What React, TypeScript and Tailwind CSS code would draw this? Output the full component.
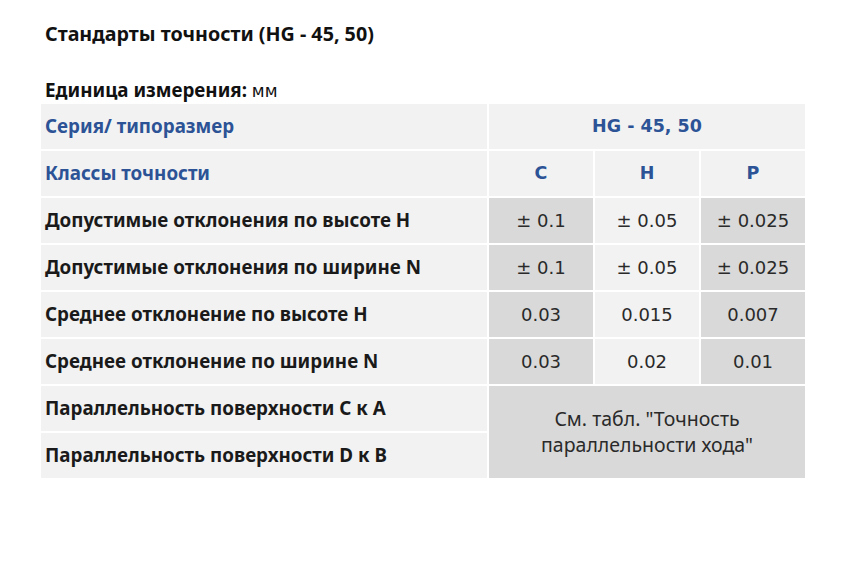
import React from "react";

const light = "bg-[#f2f2f2]";
const dark = "bg-[#d9d9d9]";

type Row = { label: string; vals: string[]; shades: string[] };

const rows: Row[] = [
  { label: "Допустимые отклонения по высоте H", vals: ["± 0.1", "± 0.05", "± 0.025"], shades: [dark, light, dark] },
  { label: "Допустимые отклонения по ширине N", vals: ["± 0.1", "± 0.05", "± 0.025"], shades: [dark, light, dark] },
  { label: "Среднее отклонение по высоте H", vals: ["0.03", "0.015", "0.007"], shades: [dark, light, dark] },
  { label: "Среднее отклонение по ширине N", vals: ["0.03", "0.02", "0.01"], shades: [dark, light, dark] },
];

const geo = { fontFamily: '"DejaVu Sans", "Noto Sans", sans-serif' };

export default function App() {
  return (
    <div
      className="w-[842px] h-[575px] bg-white text-[#1a1a1a]"
      style={{ fontFamily: '"Noto Sans", "Open Sans", sans-serif' }}
    >
      <div className="pl-[45px] pt-[21px]">
        <h1 className="text-[19.7px] font-bold leading-[26px] text-[#111]">Стандарты точности (HG - 45, 50)</h1>
        <p className="mt-[31px] text-[18.8px] leading-[24px] text-[#111]">
          <span className="font-bold">Единица измерения:</span>{" "}
          <span className="text-[17px]" style={geo}>мм</span>
        </p>
      </div>
      <div className="ml-[41px] mt-[1px] grid w-[764px] grid-cols-[446px_104px_104px_104px] grid-rows-[repeat(8,45px)] gap-[2px]">
        <div className={`${light} flex items-center pl-[4px] text-[18.8px] font-bold text-[#2c5396]`}>Серия/ типоразмер</div>
        <div className={`${light} col-span-3 flex items-center justify-center text-[17.5px] font-bold text-[#2c5396]`} style={geo}>HG - 45, 50</div>
        <div className={`${light} flex items-center pl-[4px] text-[18.8px] font-bold text-[#2c5396]`}>Классы точности</div>
        {["C", "H", "P"].map((c) => (
          <div key={c} className={`${light} flex items-center justify-center text-[17.5px] font-bold text-[#2c5396]`} style={geo}>{c}</div>
        ))}
        {rows.map((r) => (
          <React.Fragment key={r.label}>
            <div className={`${light} flex items-center pl-[4px] text-[18.8px] font-bold text-[#1a1a1a]`}>{r.label}</div>
            {r.vals.map((v, i) => (
              <div key={i} className={`${r.shades[i]} flex items-center justify-center text-[18px] text-[#2a2a2a]`} style={geo}>{v}</div>
            ))}
          </React.Fragment>
        ))}
        <div className={`${light} flex items-center pl-[4px] text-[18.8px] font-bold text-[#1a1a1a]`}>Параллельность поверхности С к А</div>
        <div className={`${dark} col-span-3 row-span-2 flex items-center justify-center text-center text-[19.5px] leading-[26px] text-[#2a2a2a]`}>
          См. табл. "Точность<br />параллельности хода"
        </div>
        <div className={`${light} flex items-center pl-[4px] text-[18.8px] font-bold text-[#1a1a1a]`}>Параллельность поверхности D к B</div>
      </div>
    </div>
  );
}
